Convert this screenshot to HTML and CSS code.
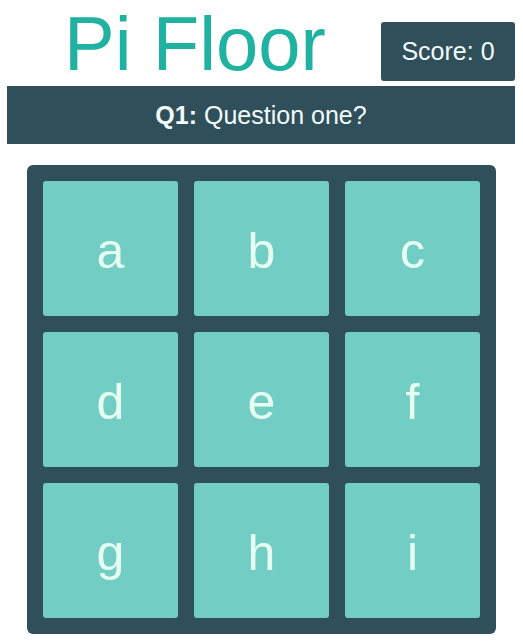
FILE: index.html
```html
<!DOCTYPE html>
<html>
<head>
<meta charset="utf-8">
<link rel="stylesheet" href="styles.css">
</head>
<body>
<div class="app">
  <header class="header">
    <h1 class="title">Pi Floor</h1>
    <div class="score">Score: 0</div>
  </header>
  <div class="question"><b>Q1:</b>&nbsp;Question one?</div>
  <div class="board">
    <div class="tile">a</div>
    <div class="tile">b</div>
    <div class="tile">c</div>
    <div class="tile">d</div>
    <div class="tile">e</div>
    <div class="tile">f</div>
    <div class="tile">g</div>
    <div class="tile">h</div>
    <div class="tile">i</div>
  </div>
</div>
</body>
</html>
```
FILE: styles.css
```css
html, body {
  margin: 0;
  padding: 0;
  background: #ffffff;
}
body {
  font-family: "Liberation Sans", Arial, sans-serif;
}
.app {
  width: 508px;
  margin-left: 7px;
}
.header {
  display: flex;
  align-items: flex-start;
  gap: 8px;
  margin-bottom: 4px;
}
.title {
  flex: 1;
  margin: 5px 0 0 0;
  padding-left: 10px;
  font-size: 76px;
  line-height: 77px;
  font-weight: normal;
  color: #20b2a0;
  text-align: center;
}
.score {
  margin-top: 22px;
  width: 134px;
  height: 59px;
  background: #2f4f5b;
  border-radius: 3px;
  color: #f2fbf8;
  font-size: 25px;
  display: flex;
  align-items: center;
  justify-content: center;
}
.question {
  height: 58px;
  background: #2f4f5b;
  color: #f2fbf8;
  font-size: 25px;
  display: flex;
  align-items: center;
  justify-content: center;
}
.board {
  margin: 21px 0 0 20px;
  width: 437px;
  padding: 16px;
  background: #2f4f5b;
  border-radius: 6px;
  display: grid;
  grid-template-columns: repeat(3, 135px);
  grid-auto-rows: 135px;
  gap: 16px;
}
.tile {
  background: #72cdc4;
  border-radius: 3px;
  color: #e6fff1;
  font-size: 50px;
  padding-top: 5px;
  display: flex;
  align-items: center;
  justify-content: center;
}
```
